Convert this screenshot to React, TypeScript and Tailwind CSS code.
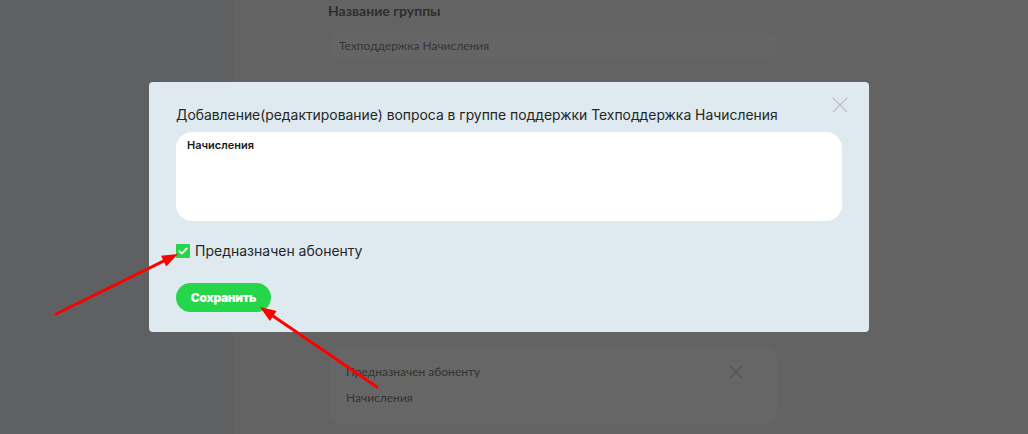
import React from "react";

const Arrow = ({ x1, y1, x2, y2 }: { x1: number; y1: number; x2: number; y2: number }) => {
  const dx = x2 - x1;
  const dy = y2 - y1;
  const len = Math.sqrt(dx * dx + dy * dy);
  const ux = dx / len;
  const uy = dy / len;
  const hl = 16;
  const hw = 6;
  const bx = x2 - ux * hl;
  const by = y2 - uy * hl;
  const px = -uy;
  const py = ux;
  return (
    <g>
      <line x1={x1} y1={y1} x2={bx + ux * 2} y2={by + uy * 2} stroke="#ff0000" strokeWidth={3} strokeLinecap="round" />
      <polygon
        points={`${x2},${y2} ${bx + px * hw},${by + py * hw} ${bx - px * hw},${by - py * hw}`}
        fill="#ff0000"
      />
    </g>
  );
};

export default function App() {
  return (
    <div className="relative w-[1028px] h-[434px] overflow-hidden bg-[#636363]" style={{ fontFamily: "Lato, 'Noto Sans', sans-serif" }}>
      <div className="flex h-full">
        <div className="w-[233px] h-full bg-[#5f6062]" />
        <div className="flex-1 pl-[97px] pt-[2px]">
          <div className="w-[447px]">
            <div className="text-[14px] font-bold text-[#2e2e2f] leading-[18px] -ml-[2px]">Название группы</div>
            <div className="mt-[12px] h-[28px] rounded-[10px] bg-[#656566] flex items-center px-[9px] text-[12px] text-[#353535]">
              Техподдержка Начисления
            </div>
            <div className="mt-[287px] h-[78px] rounded-[14px] bg-[#666666] px-[16px] pt-[17px] flex justify-between">
              <div className="flex flex-col gap-[10px] text-[12px] text-[#333333] leading-[16px]">
                <div>Предназначен абоненту</div>
                <div>Начисления</div>
              </div>
              <div className="pr-[18px] pt-[1px]">
                <svg width="14" height="14" viewBox="0 0 14 14">
                  <path d="M1 1L13 13M13 1L1 13" stroke="#555555" strokeWidth="1.5" />
                </svg>
              </div>
            </div>
          </div>
        </div>
      </div>

      <div
        className="absolute left-[149px] top-[82px] w-[720px] h-[250px] rounded-[4px] bg-[#deeaf0] px-[27px] pt-[24px]"
        style={{ fontFamily: "Inter, 'Noto Sans', sans-serif" }}
      >
        <div className="absolute right-[21px] top-[15px]">
          <svg width="16" height="16" viewBox="0 0 16 16">
            <path d="M1 1L15 15M15 1L1 15" stroke="#bcc4c8" strokeWidth="1.3" />
          </svg>
        </div>
        <div className="text-[13.9px] text-[#262626] leading-[18px]">
          Добавление(редактирование) вопроса в группе поддержки Техподдержка Начисления
        </div>
        <div className="mt-[8px] w-[666px] h-[89px] rounded-[16px] bg-white px-[11px] pt-[6px]">
          <div className="text-[11px] font-semibold text-[#1a1a1a] leading-[14px]">Начисления</div>
        </div>
        <div className="mt-[21px] flex items-center gap-[5px]">
          <div className="w-[14px] h-[14px] rounded-[1px] bg-[#28d34a] flex items-center justify-center">
            <svg width="10" height="8" viewBox="0 0 10 8">
              <path d="M1.3 4.2L3.8 6.5L8.7 1.5" stroke="#f2f2f2" strokeWidth="1.8" fill="none" strokeLinecap="round" strokeLinejoin="round" />
            </svg>
          </div>
          <div className="text-[14px] text-[#262626] leading-[18px]">Предназначен абоненту</div>
        </div>
        <div className="mt-[23px] w-[95px] h-[29px] rounded-full bg-[#25d54a] flex items-center justify-center">
          <span className="text-[12px] font-black text-white tracking-[-0.3px]">Сохранить</span>
        </div>
      </div>

      <svg className="absolute left-0 top-0 pointer-events-none" width="1028" height="434">
        <Arrow x1={56} y1={314} x2={178} y2={254} />
        <Arrow x1={377} y1={387} x2={260} y2={307} />
      </svg>
    </div>
  );
}
